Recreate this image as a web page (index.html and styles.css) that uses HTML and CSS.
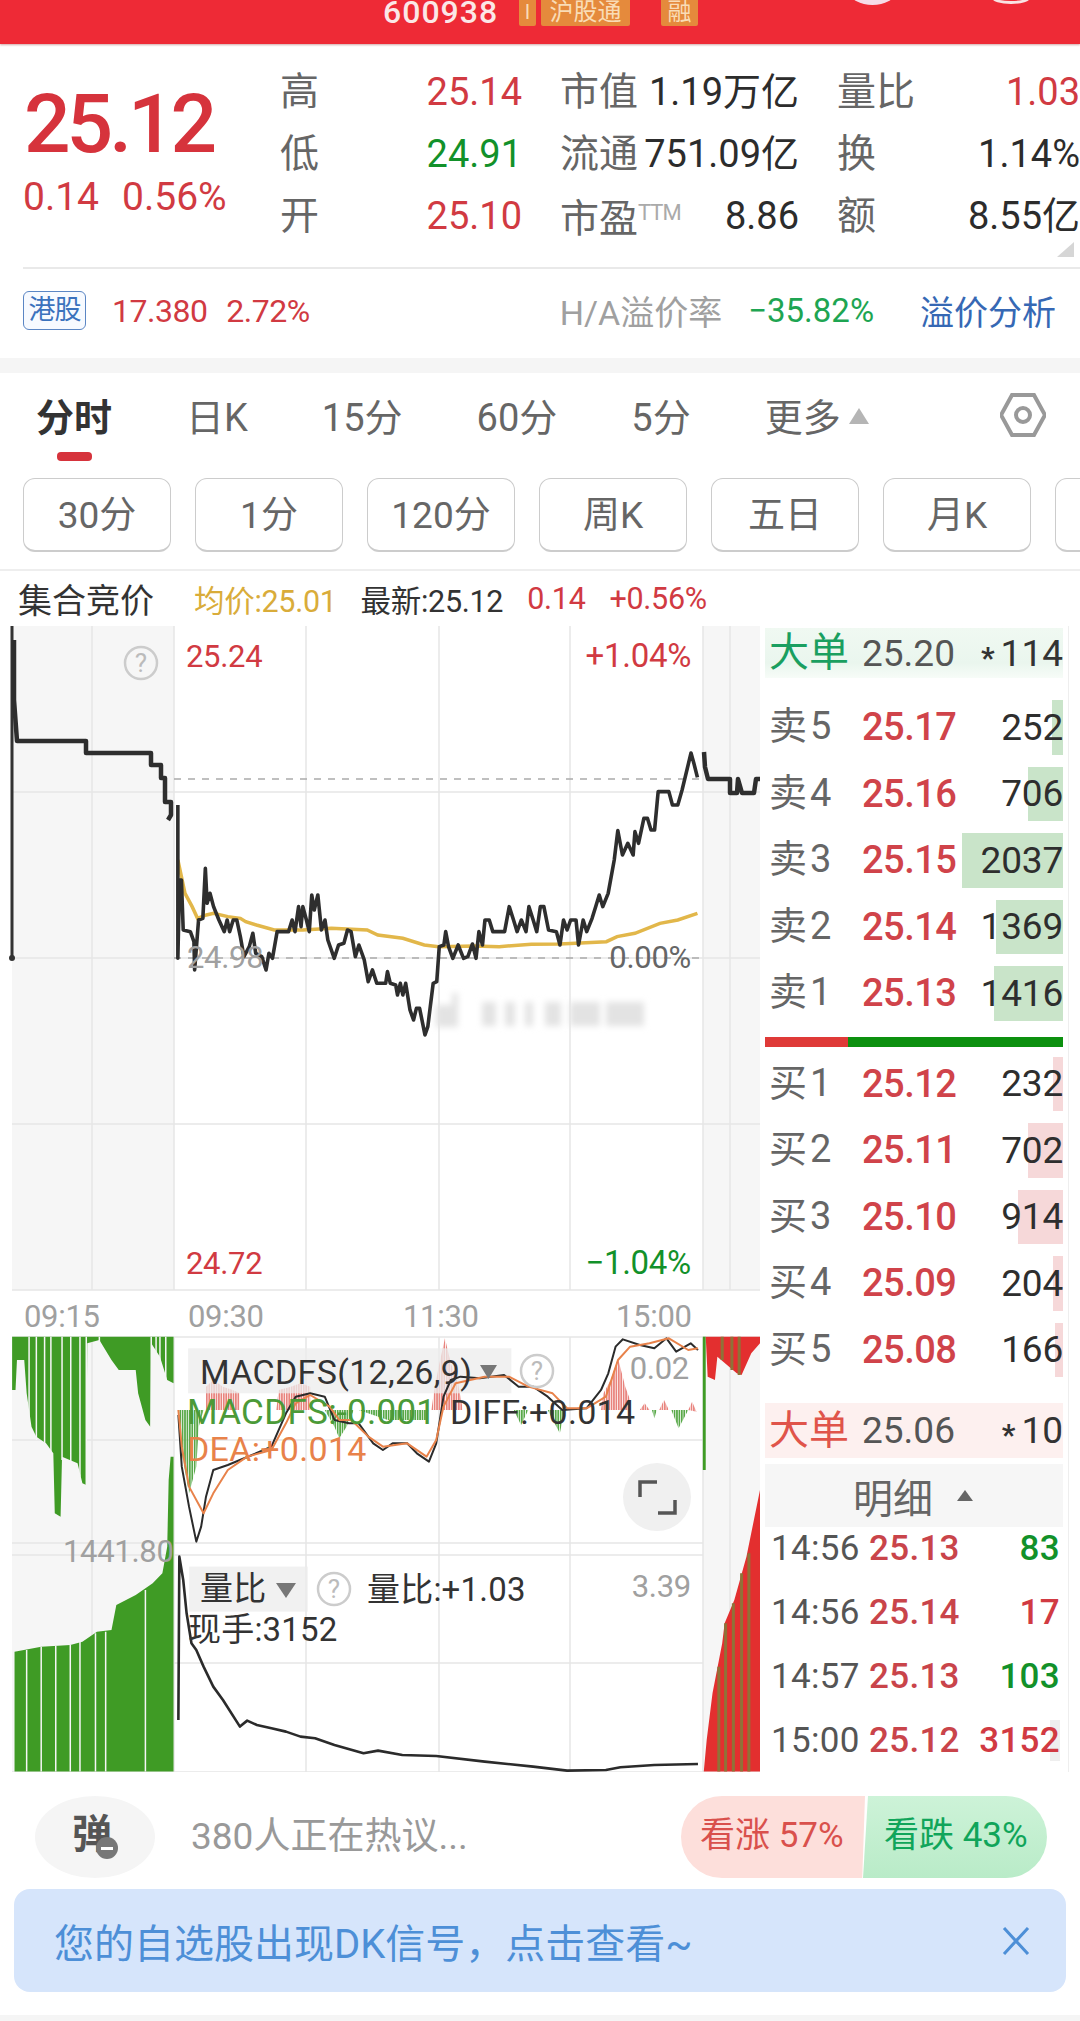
FILE: index.html
```html
<!DOCTYPE html>
<html lang="zh-CN">
<head>
<meta charset="utf-8">
<title>600938 分时</title>
<link rel="stylesheet" href="styles.css">
</head>
<body>
<div class="page">
  <header class="topbar">
    <span class="top-dot top-dot-a"></span>
    <span class="top-dot top-dot-b"></span>
    <span class="top-code">600938</span>
    <span class="top-tag top-tag-i">I</span>
    <span class="top-tag">沪股通</span>
    <span class="top-tag top-tag-r">融</span>
  </header>

  <section class="quote">
    <div class="quote-main">
      <div class="quote-price">25.12</div>
      <div class="quote-change"><span>0.14</span><span>0.56%</span></div>
    </div>
    <div class="quote-grid">
      <div class="stat"><span class="lab">高</span><span class="val red">25.14</span></div>
      <div class="stat"><span class="lab">市值</span><span class="val">1.19万亿</span></div>
      <div class="stat"><span class="lab">量比</span><span class="val red">1.03</span></div>
      <div class="stat"><span class="lab">低</span><span class="val green">24.91</span></div>
      <div class="stat"><span class="lab">流通</span><span class="val">751.09亿</span></div>
      <div class="stat"><span class="lab">换</span><span class="val">1.14%</span></div>
      <div class="stat"><span class="lab">开</span><span class="val red">25.10</span></div>
      <div class="stat"><span class="lab">市盈<small class="ttm">TTM</small></span><span class="val">8.86</span></div>
      <div class="stat"><span class="lab">额</span><span class="val">8.55亿</span></div>
    </div>
    <span class="corner"></span>
  </section>

  <section class="hk">
    <span class="hk-tag">港股</span>
    <span class="hk-val">17.380</span>
    <span class="hk-val">2.72%</span>
    <span class="hk-lab">H/A溢价率</span>
    <span class="hk-pct">−35.82%</span>
    <span class="hk-link">溢价分析</span>
  </section>
  <div class="band"></div>

  <nav class="tabs">
    <div class="tab tab-on"><span>分时</span><i class="tab-bar"></i></div>
    <div class="tab"><span>日K</span></div>
    <div class="tab"><span>15分</span></div>
    <div class="tab"><span>60分</span></div>
    <div class="tab"><span>5分</span></div>
    <div class="tab tab-more"><span>更多</span><i class="tab-tri"></i></div>
    <svg class="gear" viewBox="0 0 46 44" aria-hidden="true"><path d="M12 2H34L45 22 34 42H12L1 22Z"/><circle cx="23" cy="22" r="7"/></svg>
  </nav>

  <div class="pills">
    <span class="pill">30分</span><span class="pill">1分</span><span class="pill">120分</span><span class="pill">周K</span><span class="pill">五日</span><span class="pill">月K</span><span class="pill"></span>
  </div>

  <div class="info">
    <span class="info-title">集合竞价</span>
    <span class="info-avg">均价:25.01</span>
    <span class="info-last">最新:25.12</span>
    <span class="red">0.14</span>
    <span class="red">+0.56%</span>
  </div>

  <main class="board">
    <svg class="chart" viewBox="0 626 760 1146" width="760" height="1146" aria-label="分时图">
      <defs>
        <pattern id="pr" width="5" height="10" patternUnits="userSpaceOnUse"><rect width="3.5" height="10" fill="#e8837d"/></pattern>
        <pattern id="pg" width="5" height="10" patternUnits="userSpaceOnUse"><rect width="3.5" height="10" fill="#58a848"/></pattern>
        <filter id="soft" x="-10%" y="-30%" width="120%" height="160%"><feGaussianBlur stdDeviation="3"/></filter>
      </defs>

      <!-- shaded pre and post market -->
      <rect class="shade" x="12" y="626" width="162" height="664"/>
      <rect class="shade" x="703" y="626" width="57" height="664"/>
      <rect class="shade" x="12" y="1337" width="162" height="435"/>
      <rect class="shade" x="703" y="1337" width="57" height="435"/>

      <!-- grid -->
      <path class="grid" d="M92 626V1290M174 626V1290M306 626V1290M439 626V1290M570 626V1290M703 626V1290M730 626V1290M12 792H760M12 958H760M12 1124H760M12 1290H760"/>
      <path class="grid" d="M92 1337V1772M174 1337V1772M306 1337V1772M439 1337V1772M570 1337V1772M703 1337V1772M730 1337V1772M12 1337H760M12 1440H703M12 1543H703M12 1555H703M174 1663H703M12 1772H760"/>
      <path class="dash" d="M174 779H703M174 958H703"/>

      <!-- price line, pre market -->
      <path class="axis" d="M12 626V958"/>
      <circle class="ink" cx="12" cy="958" r="3"/>
      <polyline class="price thick" points="14,640 14,700 17,741 86,741 86,753 151,753 151,765 161,765 161,778 165,778 165,802 171,802 171,815 168,820"/>
      <!-- average line and price line use the zoomed coordinates -->
      <g transform="translate(160 760) scale(.3571 .3333)">
        <polyline class="avg" points="50,300 70,400 90,440 105,475 130,465 150,460 190,470 225,475 240,485 270,495 320,510 400,510 480,505 580,510 610,525 680,535 740,555 780,560 880,558 950,560 1040,553 1120,552 1250,545 1280,530 1330,520 1400,490 1450,480 1505,460"/>
        <polyline class="price" points="50,135 50,595 55,360 60,360 65,510 85,515 95,545 97,630 108,480 120,475 127,325 132,430 140,400 150,440 165,480 180,515 188,480 195,515 205,480 215,480 225,530 235,590 250,560 260,520 268,580 285,590 297,630 305,580 315,595 328,515 360,515 370,480 378,515 388,440 395,500 400,440 410,480 418,515 425,405 432,450 442,405 452,510 462,480 470,540 488,595 500,555 515,550 525,510 535,515 547,590 557,555 572,600 583,665 595,630 607,670 632,670 637,635 645,670 660,675 665,705 673,670 680,705 688,670 700,750 710,780 718,745 727,745 742,825 750,800 765,670 775,665 782,560 795,555 800,515 808,560 820,595 835,555 850,595 862,590 875,552 885,595 893,515 903,555 910,480 922,480 932,515 965,515 978,440 990,480 1000,515 1012,480 1025,515 1033,440 1045,480 1055,515 1065,440 1075,440 1088,510 1110,515 1120,555 1130,480 1140,510 1150,480 1165,480 1172,555 1185,480 1195,515 1210,475 1220,440 1230,405 1240,440 1255,400 1272,300 1282,212 1295,285 1310,250 1325,285 1330,215 1340,250 1355,175 1365,175 1375,210 1385,210 1395,95 1425,95 1435,135 1450,135 1462,90 1487,-21 1495,10 1505,52"/>
      </g>
      <polyline class="price thick" points="704,752 705,767 708,779 730,779 730,793 737,793 738,779 742,793 754,793 756,779 760,779"/>

      <!-- blurred watermark -->
      <g class="smudge" filter="url(#soft)">
        <rect x="436" y="1005" width="22" height="22"/><rect x="452" y="993" width="6" height="34"/><rect x="482" y="1002" width="14" height="24"/><rect x="505" y="1002" width="10" height="24"/><rect x="525" y="1002" width="8" height="24"/><rect x="545" y="1002" width="16" height="24"/><rect x="570" y="1002" width="30" height="24"/><rect x="606" y="1002" width="38" height="24"/>
      </g>

      <text class="t t-sm red" x="186" y="667">25.24</text>
      <text class="t t-pc red end" x="691" y="667">+1.04%</text>
      <text class="t t-sm grey" x="187" y="968">24.98</text>
      <text class="t t-sm dim end" x="691" y="968">0.00%</text>
      <text class="t t-sm red" x="186" y="1274">24.72</text>
      <text class="t t-pc green end" x="691" y="1274">−1.04%</text>
      <g><circle class="q" cx="141" cy="663" r="16"/><text class="q-t" x="141" y="672">?</text></g>

      <!-- time axis -->
      <text class="t t-sm grey" x="24" y="1327">09:15</text>
      <text class="t t-sm grey" x="188" y="1327">09:30</text>
      <text class="t t-sm grey" x="403" y="1327">11:30</text>
      <text class="t t-sm grey" x="616" y="1327">15:00</text>

      <!-- side volume blocks -->
      <g transform="translate(0 1280) scale(.4847 .3333)">
        <polygon class="bar-g" points="25,170 25,330 32,330 35,240 50,240 55,340 65,440 75,470 95,490 110,520 113,700 125,710 128,530 160,550 170,610 178,615 180,190 205,180 230,240 245,270 280,270 285,340 300,420 310,440 312,190 330,230 345,300 358,310 358,170"/>
        <polygon class="bar-g" points="30,1115 85,1100 145,1095 170,1085 200,1055 230,1050 240,975 280,945 315,910 335,880 345,800 348,600 352,530 358,530 358,1475 30,1475"/>
        <path class="stripes" d="M60 170V440M75 170V480M92 170V500M105 170V520M128 170V540M146 170V560M165 170V590M178 170V620M205 170V210M312 170V440M322 170V220M330 170V240M342 170V300M55 1110V1475M85 1100V1475M115 1097V1475M145 1095V1475M165 1085V1475M197 1060V1475M218 1055V1475M300 930V1475"/>
        <polygon class="bar-g" points="1450,170 1450,570 1456,570 1456,170"/>
        <polygon class="bar-r" points="1456,170 1460,290 1475,300 1480,230 1520,280 1530,285 1550,220 1568,190 1568,170"/>
        <path class="olive" d="M1490 170V240M1510 170V270M1525 170V285"/>
        <polygon class="bar-r" points="1452,1475 1458,1380 1470,1240 1490,1090 1495,1030 1515,960 1540,830 1568,630 1568,1475"/>
        <path class="olive" d="M1483 1475V1160M1497 1475V1030M1513 1475V970M1530 1475V880M1545 1475V820"/>

        <!-- MACD -->
        <g fill="url(#pr)">
          <polygon points="425,390 425,320 440,300 460,320 480,330 495,340 495,390"/><polygon points="570,390 575,330 600,320 620,310 640,320 640,390"/><polygon points="890,390 895,340 905,260 918,175 930,250 945,310 955,390"/><polygon points="1240,390 1245,340 1260,300 1275,235 1290,320 1300,360 1300,390"/><polygon points="1320,390 1330,370 1340,390"/><polygon points="1360,390 1370,360 1380,390"/><polygon points="1420,390 1428,365 1437,395"/>
        </g>
        <g fill="url(#pg)">
          <polygon points="370,390 375,520 390,640 405,560 410,440 420,390"/><polygon points="670,390 690,440 700,475 715,440 730,390"/><polygon points="740,390 800,420 880,420 885,390"/><polygon points="1060,390 1075,435 1090,390"/><polygon points="1130,390 1155,460 1165,390"/><polygon points="1345,390 1350,415 1355,390"/><polygon points="1385,390 1400,445 1420,390"/>
        </g>
        <rect class="chip" x="388" y="205" width="667" height="135"/>
        <polyline class="thin ink-line" points="368,405 375,560 390,680 405,785 415,740 425,650 440,570 470,555 520,525 560,500 590,400 610,350 640,340 670,350 690,420 720,430 740,430 770,490 790,510 810,490 840,490 860,520 885,545 900,490 915,350 930,300 950,290 990,295 1040,285 1070,320 1100,320 1130,350 1160,390 1210,385 1240,330 1255,280 1270,200 1285,178 1320,195 1350,205 1375,175 1395,215 1425,190 1440,210"/>
        <polyline class="thin orange-line" points="368,390 375,500 390,620 420,700 440,640 470,570 510,530 560,510 590,430 610,370 640,345 680,380 700,420 725,420 760,470 790,500 840,490 880,530 900,480 915,380 940,310 1000,290 1050,290 1090,320 1140,340 1170,385 1210,385 1250,350 1275,240 1300,200 1340,190 1380,175 1420,210 1440,205"/>
        <!-- ratio line -->
        <rect class="chip" x="390" y="860" width="245" height="135"/>
        <polyline class="thin ratio ink-line" points="368,1320 370,830 378,900 385,1000 395,1090 405,1110 420,1160 440,1220 460,1260 495,1340 510,1322 530,1335 560,1345 590,1355 620,1370 650,1375 690,1395 750,1420 780,1412 830,1425 900,1428 1000,1445 1100,1460 1170,1472 1250,1470 1280,1462 1350,1455 1440,1452"/>
      </g>

      <text class="t t-lg ink" x="200" y="1384">MACDFS(12,26,9)</text>
      <path class="tri" d="M480 1365H497L488.500 1379Z"/>
      <g><circle class="q" cx="537" cy="1371" r="16"/><text class="q-t" x="537" y="1380">?</text></g>
      <text class="t t-sm grey end" x="689" y="1379">0.02</text>
      <text class="t t-xl macd-g" x="187" y="1424">MACDFS:-0.001</text>
      <text class="t t-lg ink" x="450" y="1424">DIFF:+0.014</text>
      <text class="t t-lg orange" x="187" y="1461">DEA:+0.014</text>
      <circle class="full-bg" cx="657" cy="1497" r="34"/>
      <path class="full-ic" d="M640 1497V1482H657M675 1500V1513H658"/>
      <text class="t t-sm grey" x="63" y="1562">1441.80</text>

      <text class="t t-cjk ink" x="200" y="1600">量比</text>
      <path class="tri" d="M276 1583H296L286 1598Z"/>
      <g><circle class="q" cx="334" cy="1589" r="16"/><text class="q-t" x="334" y="1598">?</text></g>
      <text class="t t-cjk ink" x="367" y="1601">量比:+1.03</text>
      <text class="t t-sm grey end" x="691" y="1597">3.39</text>
      <text class="t t-cjk ink" x="188" y="1641">现手:3152</text>
    </svg>

    <aside class="book">
      <div class="big big-g"><span class="big-l">大单</span><span class="big-p">25.20</span><span class="big-q"><b>*</b>114</span></div>
      <div class="rows rows-sell">
        <div class="row"><i class="fill" style="width:11px"></i><span class="r-l">卖5</span><span class="r-p">25.17</span><span class="r-q">252</span></div>
        <div class="row"><i class="fill" style="width:35px"></i><span class="r-l">卖4</span><span class="r-p">25.16</span><span class="r-q">706</span></div>
        <div class="row"><i class="fill" style="width:101px"></i><span class="r-l">卖3</span><span class="r-p">25.15</span><span class="r-q">2037</span></div>
        <div class="row"><i class="fill" style="width:67px"></i><span class="r-l">卖2</span><span class="r-p">25.14</span><span class="r-q">1369</span></div>
        <div class="row"><i class="fill" style="width:69px"></i><span class="r-l">卖1</span><span class="r-p">25.13</span><span class="r-q">1416</span></div>
      </div>
      <div class="split"><i></i></div>
      <div class="rows rows-buy">
        <div class="row"><i class="fill" style="width:10px"></i><span class="r-l">买1</span><span class="r-p">25.12</span><span class="r-q">232</span></div>
        <div class="row"><i class="fill" style="width:35px"></i><span class="r-l">买2</span><span class="r-p">25.11</span><span class="r-q">702</span></div>
        <div class="row"><i class="fill" style="width:45px"></i><span class="r-l">买3</span><span class="r-p">25.10</span><span class="r-q">914</span></div>
        <div class="row"><i class="fill" style="width:10px"></i><span class="r-l">买4</span><span class="r-p">25.09</span><span class="r-q">204</span></div>
        <div class="row"><i class="fill" style="width:8px"></i><span class="r-l">买5</span><span class="r-p">25.08</span><span class="r-q">166</span></div>
      </div>
      <div class="big big-r"><span class="big-l">大单</span><span class="big-p">25.06</span><span class="big-q"><b>*</b>10</span></div>
      <div class="detail-head"><span>明细</span><i></i></div>
      <div class="trade"><span class="tr-t">14:56</span><span class="tr-p">25.13</span><span class="tr-q green">83</span></div>
      <div class="trade"><span class="tr-t">14:56</span><span class="tr-p">25.14</span><span class="tr-q red">17</span></div>
      <div class="trade"><span class="tr-t">14:57</span><span class="tr-p">25.13</span><span class="tr-q green">103</span></div>
      <div class="trade trade-last"><span class="tr-t">15:00</span><span class="tr-p">25.12</span><span class="tr-q red">3152</span></div>
    </aside>
  </main>

  <section class="talk">
    <div class="danmu">弹<span class="danmu-off"></span></div>
    <span class="talk-text">380人正在热议...</span>
    <div class="vote">
      <span class="vote-up">看涨 57%</span>
      <span class="vote-down">看跌 43%</span>
    </div>
  </section>

  <section class="notice">
    <span>您的自选股出现DK信号，点击查看~</span>
    <svg class="notice-x" viewBox="0 0 28 28" aria-hidden="true"><path d="M2 1L26 27M26 1L2 27"/></svg>
  </section>
  <div class="foot"></div>
</div>
</body>
</html>
```

FILE: styles.css
```css
* { box-sizing: border-box; }
html, body { margin: 0; padding: 0; background: #fff; }
body { font-family: Roboto, "Noto Sans CJK SC", sans-serif; color: #333; }
.page { width: 1080px; height: 2021px; overflow: hidden; background: #fff; }
.red { color: #d13a42; fill: #d13a42; }
.green { color: #12912a; fill: #12912a; }

/* top bar */
.topbar { position: relative; height: 44px; background: #ee2a36; box-shadow: 0 1px 2px rgba(120,0,0,.35); display: flex; align-items: flex-start; padding-left: 383px; overflow: hidden; }
.top-code { font-size: 32px; line-height: 25px; letter-spacing: 1px; color: #fbe7e7; width: 136px; flex: none; font-weight: 500; }
.top-tag { height: 26px; padding: 0; background: #e58a3c; color: #f9dcb6; font-size: 24px; line-height: 25px; margin-right: 5px; flex: none; width: 89px; text-align: center; white-space: nowrap; border-radius: 0 0 2px 2px; }
.top-tag-i { width: 17px; font-size: 20px; }
.top-tag-r { width: 37px; margin-left: 26px; }
.top-dot { position: absolute; top: -20px; border-radius: 50%; }
.top-dot-a { left: 850px; width: 45px; height: 25px; background: #f6dbe8; }
.top-dot-b { left: 992px; top: -8px; width: 38px; height: 12px; border: 3px solid #f9e3e3; background: none; }

/* quote */
.quote { position: relative; height: 223px; display: flex; }
.quote-main { width: 280px; flex: none; padding: 35px 0 0 25px; }
.quote-price { font-size: 82px; line-height: 90px; letter-spacing: -4px; font-weight: 500; color: #d6333c; margin-left: -1px; }
.quote-change { display: flex; gap: 23px; font-size: 39px; line-height: 46px; color: #d13a42; margin: 5px 0 0 -2px; }
.quote-grid { display: grid; grid-template-columns: 242px 239px 243px; grid-auto-rows: 62px; column-gap: 38px; padding-top: 17px; flex: none; }
.stat { display: flex; justify-content: space-between; align-items: center; font-size: 38px; white-space: nowrap; }
.lab { color: #666; font-size: 39px; line-height: 62px; }
.val { color: #2c2c2c; line-height: 62px; }
.val.red { color: #d13a42; }
.val.green { color: #12912a; }
.ttm { font-size: 22px; color: #aaa; vertical-align: 12px; letter-spacing: -1px; }
.corner { position: absolute; right: 6px; bottom: 10px; width: 0; height: 0; border-style: solid; border-width: 0 0 15px 17px; border-color: transparent transparent #d6d6d6 transparent; }

/* hk */
.hk { margin-left: 23px; border-top: 2px solid #e9e9e9; height: 91px; display: flex; align-items: center; padding-bottom: 6px; }
.hk-tag { width: 63px; height: 39px; border: 1px solid #5b86c4; border-radius: 6px; color: #3b72bd; font-size: 27px; line-height: 37px; text-align: center; background: #f7faff; margin-right: 26px; letter-spacing: -1px; }
.hk-val { font-size: 32px; color: #d13a42; margin-right: 19px; letter-spacing: -.5px; }
.hk-lab { font-size: 34px; color: #a0a0a0; margin-left: 231px; }
.hk-pct { font-size: 33px; color: #1ea552; margin-left: 26px; }
.hk-link { font-size: 34px; color: #3668b4; margin-left: 46px; }
.band { height: 15px; background: #f5f5f5; }

/* tabs */
.tabs { display: flex; align-items: flex-start; gap: 74px; padding: 18px 34px 0 36px; height: 105px; font-size: 38px; color: #666; }
.tab { display: flex; flex-direction: column; align-items: center; line-height: 54px; white-space: nowrap; }
.tab-on { font-weight: 700; color: #333; }
.tab-bar { width: 35px; height: 9px; margin-top: 7px; border-radius: 4px; background: #d6333c; }
.tab-more { flex-direction: row; align-items: center; gap: 8px; }
.tab-tri { width: 0; height: 0; border-style: solid; border-width: 0 10px 16px; border-color: transparent transparent #b5b5b5; margin-top: -4px; }
.gear { width: 46px; height: 44px; margin: 2px 0 0 auto; fill: none; stroke: #999; stroke-width: 4; }

/* pills */
.pills { display: flex; gap: 24px; padding-left: 23px; height: 93px; overflow: hidden; border-bottom: 2px solid #eee; }
.pill { flex: none; width: 148px; height: 74px; border: 1px solid #ccc; border-bottom-width: 2px; border-radius: 12px; text-align: center; font-size: 37px; line-height: 74px; color: #666; }

/* info */
.info { display: flex; align-items: center; height: 55px; padding-left: 18px; font-size: 30.500px; gap: 24px; white-space: nowrap; letter-spacing: -.3px; }
.info-title { font-size: 34px; margin-right: 16px; letter-spacing: 0; color: #333; }
.info-avg { color: #d9ac3a; }
.info-last { color: #333; }

/* chart */
.board { display: flex; height: 1146px; }
.chart { flex: none; display: block; width: 760px; height: 1146px; }
.shade { fill: #f6f6f6; }
.grid { fill: none; stroke: #e6e6e6; stroke-width: 1.5; }
.dash { fill: none; stroke: #aaa; stroke-width: 1.5; stroke-dasharray: 7 7; }
.axis { stroke: #333; stroke-width: 3; fill: none; }
.ink { fill: #333; }
.price { fill: none; stroke: #2e2e2e; stroke-width: 3.6; stroke-linejoin: round; vector-effect: non-scaling-stroke; }
.price.thick { stroke-width: 4.500; }
.avg { fill: none; stroke: #e2b74a; stroke-width: 3.5; vector-effect: non-scaling-stroke; }
.smudge { fill: #e3e3e3; }
.t { font-family: Roboto, "Noto Sans CJK SC", sans-serif; letter-spacing: -.3px; }
.t-sm { font-size: 31px; }
.t-pc { font-size: 33px; }
.t-lg { font-size: 34px; letter-spacing: .3px; }
.t-xl { font-size: 35px; letter-spacing: .3px; }
.t-cjk { font-size: 33px; letter-spacing: .2px; }
.end { text-anchor: end; }
.grey { fill: #a0a0a0; }
.dim { fill: #666; }
.macd-g { fill: #4b9a38; }
.orange { fill: #e8824a; }
.q { fill: none; stroke: #ccc; stroke-width: 2.5; }
.q-t { font-family: Roboto, sans-serif; font-size: 26px; fill: #bbb; text-anchor: middle; }
.bar-g { fill: #3f9b25; }
.bar-r { fill: #e32f2f; }
.stripes { fill: none; stroke: #f6f6f6; stroke-width: 1.5; vector-effect: non-scaling-stroke; }
.olive { fill: none; stroke: #8f7238; stroke-width: 3; vector-effect: non-scaling-stroke; }
.chip { fill: #ececec; fill-opacity: .75; }
.thin { fill: none; stroke-width: 2; stroke-linejoin: round; vector-effect: non-scaling-stroke; }
.ratio { stroke-width: 2.6; }
.ink-line { stroke: #2b2b2b; }
.orange-line { stroke: #e8824a; }
.tri { fill: #777; }
.full-bg { fill: #f0f0f0; }
.full-ic { fill: none; stroke: #555; stroke-width: 3.500; }

/* order book */
.book { width: 309px; flex: none; border-right: 1px solid #eee; padding: 2px 5px 0 5px; }
.big { display: flex; align-items: center; height: 50px; padding-left: 4px; }
.big-g { background: linear-gradient(#f0f9f2, #eaf6ee 70%, #f7fcf8); }
.big-r { margin-top: 20px; height: 55px; background: #fdf0ef; }
.big-l { font-size: 40px; width: 93px; flex: none; line-height: 50px; }
.big-g .big-l { color: #1a9f60; }
.big-r .big-l { color: #e0544a; }
.big-p { font-size: 37px; color: #555; width: 93px; flex: none; }
.big-q { flex: 1; text-align: right; font-size: 37px; color: #333; }
.big-q b { font-size: 30px; font-weight: 700; margin-right: 6px; vertical-align: -2px; }
.rows-sell { margin-top: 16px; }
.rows-buy { margin-top: 4px; }
.row { position: relative; display: flex; align-items: center; height: 66.500px; padding-left: 4px; }
.row > span { position: relative; }
.fill { position: absolute; right: 0; top: 6px; bottom: 6px; }
.rows-sell .fill { background: #c9e4c9; }
.rows-buy .fill { background: #f6d8d9; }
.r-l { width: 93px; flex: none; font-size: 38px; line-height: 50px; margin-top: -2px; letter-spacing: 3px; color: #666; }
.r-p { width: 93px; flex: none; font-size: 38px; color: #d0434a; letter-spacing: -.5px; font-weight: 500; }
.r-q { flex: 1; text-align: right; font-size: 37px; color: #2e2e2e; letter-spacing: -.2px; }
.split { height: 10px; margin-top: 10px; background: #0c900f; }
.split i { display: block; width: 83px; height: 10px; background: #df3a38; }
.detail-head { margin-top: 6px; height: 63px; background: #f6f6f6; display: flex; align-items: center; padding-left: 88px; font-size: 40px; color: #666; }
.detail-head i { width: 0; height: 0; margin-left: 24px; border-style: solid; border-width: 0 8px 11px; border-color: transparent transparent #666; }
.trade { display: flex; align-items: center; height: 64px; padding: 0 3px 22px 6px; font-size: 35px; letter-spacing: .3px; white-space: nowrap; }
.tr-t { width: 98px; flex: none; color: #555; }
.tr-p { width: 90px; flex: none; color: #c9444a; font-weight: 500; }
.tr-q { flex: 1; text-align: right; font-weight: 500; }
.trade-last .tr-q { background: linear-gradient(90deg, transparent 90%, #eee 90%); }

/* discussion */
.talk { height: 117px; padding: 24px 33px 0 35px; display: flex; }
.danmu { position: relative; width: 120px; height: 82px; border-radius: 50%; background: #f5f5f5; font-size: 40px; font-weight: 700; color: #555; text-align: center; line-height: 78px; padding-right: 6px; }
.danmu-off { position: absolute; left: 61px; top: 41px; width: 22px; height: 22px; border-radius: 50%; background: #777; }
.danmu-off::after { content: ""; position: absolute; left: 5px; right: 5px; top: 10px; height: 3px; background: #fff; }
.talk-text { font-size: 37px; color: #999; margin-left: 36px; line-height: 82px; white-space: nowrap; }
.vote { display: flex; margin-left: auto; font-size: 35px; line-height: 80px; height: 82px; }
.vote span { display: block; white-space: nowrap; }
.vote-up { width: 184px; padding-left: 19px; background: #fddfdb; color: #d9504c; border-radius: 41px 0 0 41px; clip-path: polygon(0 0, 100% 0, 98.500% 100%, 0 100%); }
.vote-down { width: 184px; padding-left: 21px; margin-left: -2px; background: linear-gradient(#cdf3d8, #b9ebc8); color: #10a55a; border-radius: 0 41px 41px 0; clip-path: polygon(5px 0, 100% 0, 100% 100%, 0 100%); }

/* notice */
.notice { margin: 0 14px; height: 103px; border-radius: 16px; background: #d6e5fb; color: #4d8fd7; font-size: 40px; display: flex; align-items: center; padding: 0 36px 0 40px; justify-content: space-between; white-space: nowrap; }
.notice-x { width: 28px; height: 28px; fill: none; stroke: #4d8fd7; stroke-width: 3; }
.foot { height: 29px; margin-top: 23px; background: #f5f5f5; }
```
